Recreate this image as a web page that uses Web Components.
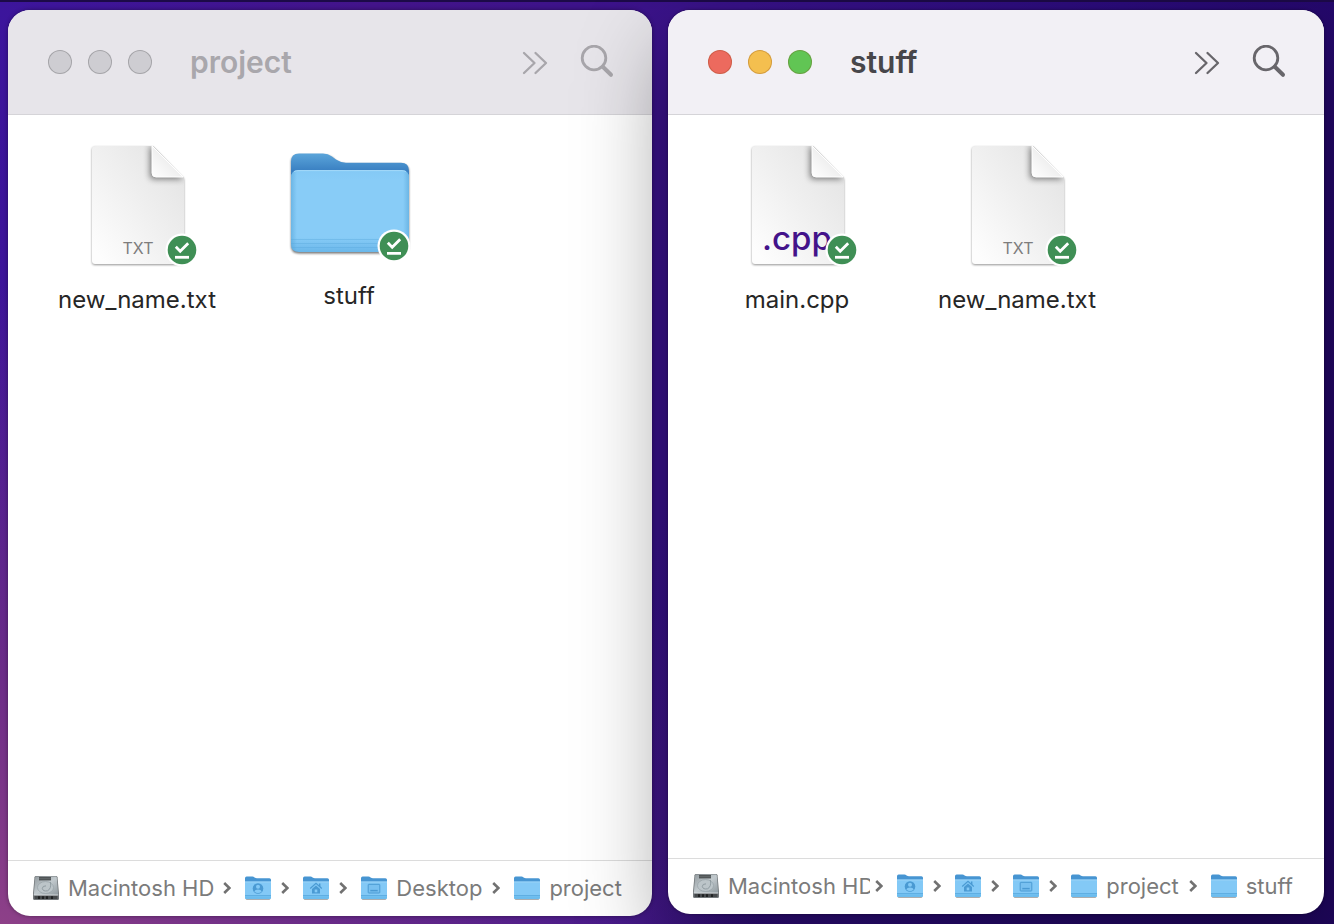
<!DOCTYPE html>
<html lang="en">
<head>
<meta charset="utf-8">
<title>Finder</title>
<style>
html, body { margin: 0; height: 100%; }
body { font-family: Inter, "Liberation Sans", sans-serif; }
</style>
</head>
<body>
<desk-top>
  <finder-window heading="project">
    <file-item kind="txt" name="new_name.txt"></file-item>
    <file-item kind="folder" name="stuff"></file-item>
    <path-crumb slot="path" kind="drive" label="Macintosh HD" shrinks></path-crumb>
    <path-crumb slot="path" kind="user" hint="Users"></path-crumb>
    <path-crumb slot="path" kind="home" hint="Home"></path-crumb>
    <path-crumb slot="path" kind="desktop" label="Desktop"></path-crumb>
    <path-crumb slot="path" kind="folder" label="project" last></path-crumb>
  </finder-window>
  <finder-window heading="stuff" active>
    <file-item kind="cpp" name="main.cpp"></file-item>
    <file-item kind="txt" name="new_name.txt"></file-item>
    <path-crumb slot="path" kind="drive" label="Macintosh HD" shrinks></path-crumb>
    <path-crumb slot="path" kind="user" hint="Users"></path-crumb>
    <path-crumb slot="path" kind="home" hint="Home"></path-crumb>
    <path-crumb slot="path" kind="desktop" hint="Desktop"></path-crumb>
    <path-crumb slot="path" kind="folder" label="project"></path-crumb>
    <path-crumb slot="path" kind="folder" label="stuff" last></path-crumb>
  </finder-window>
</desk-top>
<script>
const badge = (x, y) => `
  <g transform="translate(${x} ${y})">
    <circle r="16.500" fill="#fff"/><circle r="14.300" fill="#3f8f55"/>
    <path d="M-6.200 -3.200L-1.800 1.200L6.200 -6.800" fill="none" stroke="#fff" stroke-width="2.800"/>
    <path d="M-7 7.300H7" stroke="#fff" stroke-width="2.800"/>
  </g>`;

const sheet = (caption) => `
<svg width="128" height="130" viewBox="-1 1 128 130" aria-hidden="true">
  <defs>
    <linearGradient id="paper" x1="0" y1=".85" x2=".8" y2=".1"><stop offset="0" stop-color="#fdfdfd"/><stop offset=".55" stop-color="#f0f0f0"/><stop offset="1" stop-color="#e6e6e6"/></linearGradient>
    <linearGradient id="fold" x1="0" y1="1" x2=".6" y2=".4"><stop offset="0" stop-color="#fff"/><stop offset="1" stop-color="#ececec"/></linearGradient>
    <filter id="soft" x="-20%" y="-20%" width="140%" height="140%"><feGaussianBlur stdDeviation="1.3"/></filter>
    <filter id="wide" x="-40%" y="-40%" width="180%" height="180%"><feGaussianBlur stdDeviation="3"/></filter>
    <clipPath id="edge"><path d="M22 2H79L110 34V117Q110 120 107 120H21Q18 120 18 117V5Q18 2 22 2Z"/></clipPath>
  </defs>
  <path d="M22 3H79L110 35V118Q110 121 107 121H21Q18 121 18 118V6Q18 3 22 3Z" fill="#000" opacity=".42" filter="url(#soft)"/>
  <path d="M22 2H79L110 34V117Q110 120 107 120H21Q18 120 18 117V5Q18 2 22 2Z" fill="url(#paper)"/>
  <g clip-path="url(#edge)"><path d="M76 1V32Q76 35 80 35H110L78 2Z" fill="#000" opacity=".5" filter="url(#wide)"/></g>
  <path d="M78 2V29Q78 33 82 33H109Z" fill="url(#fold)" stroke="#fff" stroke-width="1"/>
  ${caption}
  ${badge(108, 106)}
</svg>`;

const ART = {
  txt: sheet(`<text x="64" y="110" text-anchor="middle" font-size="16" fill="#7d7d7d">TXT</text>`),
  cpp: sheet(`<text x="63" y="106" text-anchor="middle" font-size="33" font-weight="500" fill="#43138a">.cpp</text>`),
  folder: `
<svg width="128" height="126" viewBox="-1 0 128 126" aria-hidden="true">
  <defs>
    <linearGradient id="back" x1="0" y1="0" x2="0" y2="1"><stop offset="0" stop-color="#5ba5da"/><stop offset=".28" stop-color="#3a80c2"/></linearGradient>
    <linearGradient id="front" x1="0" y1="0" x2="0" y2="1"><stop offset="0" stop-color="#84c9f5"/><stop offset=".12" stop-color="#88ccf7"/><stop offset=".82" stop-color="#88ccf7"/><stop offset="1" stop-color="#6ab7ea"/></linearGradient>
    <linearGradient id="sides"><stop offset="0" stop-color="#4f9fd3" stop-opacity=".5"/><stop offset=".05" stop-color="#4f9fd3" stop-opacity="0"/><stop offset=".95" stop-color="#4f9fd3" stop-opacity="0"/><stop offset="1" stop-color="#4f9fd3" stop-opacity=".5"/></linearGradient>
    <filter id="soft" x="-20%" y="-20%" width="140%" height="140%"><feGaussianBlur stdDeviation="1.200"/></filter>
  </defs>
  <path d="M5 18Q5 10 13 10H37Q43 10 47 13L50 16Q55 19 60 19H115Q123 19 123 27V101Q123 108.500 115 108.500H13Q5 108.500 5 101Z" fill="#000" opacity=".55" filter="url(#soft)"/>
  <path d="M5 16.500Q5 8.500 13 8.500H37Q42 8.500 46 11.500L50 14.500Q55 17.800 60 17.800H115Q123 17.800 123 26V70H5Z" fill="url(#back)"/>
  <path d="M5 33Q5 25 13 25H115Q123 25 123 33V99Q123 107 115 107H13Q5 107 5 99Z" fill="url(#front)"/>
  <path d="M5 33Q5 25 13 25H115Q123 25 123 33V99Q123 107 115 107H13Q5 107 5 99Z" fill="url(#sides)"/>
  <path d="M8 26.500Q10 25.600 13 25.600H115Q118 25.600 120 26.500" fill="none" stroke="#a4d9f9" stroke-width="1"/>
  <path d="M5 94.500H123M5 98.500H123M6 102.500H122" stroke="#5aa9dd" stroke-width="1" opacity=".4"/>
  ${badge(108, 101)}
</svg>`
};

const small = (glyph) => `
<svg width="26" height="26" viewBox="0 0 26 26" aria-hidden="true">
  <rect x=".6" y="6" width="24.800" height="19" rx="1.500" fill="#777" opacity=".6"/>
  <path d="M0 3.200Q0 1.600 1.600 1.600H7.500Q8.600 1.600 9.600 2.400Q10.600 3.200 12 3.200H24.400Q26 3.200 26 4.800V12H0Z" fill="#4795d2"/>
  <path d="M0 6.600H26V22.400Q26 24 24.400 24H1.600Q0 24 0 22.400Z" fill="#83c9f6"/>
  <path d="M0 7H26" stroke="#a3d8f8" stroke-width=".8"/>
  <path d="M0 20.600H26" stroke="#5cacdf" stroke-width="1"/>
  <path d="M0 21.200H26V22.400Q26 24 24.400 24H1.600Q0 24 0 22.400Z" fill="#6cbcee"/>
  ${glyph}
</svg>`;

const SMALL = {
  folder: small(""),
  user: small(`<circle cx="13" cy="13.500" r="5.300" fill="#4a9ad3"/><circle cx="13" cy="11.800" r="2" fill="#83c9f6"/><path d="M9.300 16.500Q10 14.600 13 14.600T16.700 16.500Q15 18 13 18T9.300 16.500Z" fill="#83c9f6"/>`),
  home: small(`<path d="M7.200 13.500L13 8.300L18.800 13.500" fill="none" stroke="#4a9ad3" stroke-width="1.200"/><path d="M16 8.600H17.400V12H16Z" fill="#4a9ad3"/><path d="M9 14L13 10.600L17 14V18.500H9Z" fill="#4a9ad3"/><path d="M11.700 17.300V14.500H14.300V17.300Z" fill="#83c9f6"/>`),
  desktop: small(`<rect x="7.200" y="9.300" width="11.600" height="8.700" rx=".6" fill="#78c0f0" stroke="#4a9ad3" stroke-width="1"/><path d="M9.300 15.600H16.700" stroke="#4a9ad3" stroke-width="1.500"/>`),
  drive: `
<svg width="26" height="26" viewBox="0 0 26 28" preserveAspectRatio="none" aria-hidden="true">
  <defs><linearGradient id="metal" x1="0" y1="0" x2="1" y2="1"><stop offset="0" stop-color="#929a9e"/><stop offset=".5" stop-color="#c1c9cd"/><stop offset="1" stop-color="#909a9f"/></linearGradient></defs>
  <path d="M3 1H23Q24.300 1 24.500 2.500L26 20V25.500Q26 27 24.500 27H1.500Q0 27 0 25.500V20L1.500 2.500Q1.700 1 3 1Z" fill="#74797c"/>
  <path d="M3.300 1.500H22.700Q23.600 1.500 23.800 2.800L25.200 21.500H.8L2.200 2.800Q2.400 1.500 3.300 1.500Z" fill="url(#metal)"/>
  <rect x="6" y="2.200" width="12" height="3.600" fill="#4c5153"/>
  <path d="M6 4H18" stroke="#777e81" stroke-width=".6"/>
  <ellipse cx="12.500" cy="13.500" rx="8" ry="6.400" fill="#bcc5c9" stroke="#98a3a8" stroke-width=".8"/>
  <path d="M17.500 7.500Q18.500 15 14.500 17Q10 18 9.300 14.500Q9.500 11.500 13 11.700" fill="none" stroke="#89959b" stroke-width=".9"/>
  <path d="M.8 21.500H25.200" stroke="#dfe4e6" stroke-width=".8"/>
  <path d="M1.500 22.500H24.500V25.800H1.500Z" fill="#45494b"/>
  <path d="M5 23H7V25.800H5ZM9 23H11V25.800H9ZM13 23H15V25.800H13ZM18 23H20V25.800H18Z" fill="#1f2122"/>
</svg>`
};

class DeskTop extends HTMLElement {
  constructor() {
    super();
    this.attachShadow({ mode: "open" }).innerHTML = `
<style>
:host {
  display: grid; grid-template-columns: 644fr 656fr; gap: 16px;
  box-sizing: border-box; min-height: 100vh; padding: 8px 10px 8px 8px;
  border-top: 2px solid #1c0a48;
  background:
    radial-gradient(ellipse 760px 640px at 0 100%, #8d4088 0%, #6b2c88 40%, rgba(76,28,140,0) 100%),
    linear-gradient(100deg, #3c159c 0%, #43148a 25%, #38128a 50%, #2b0b7c 75%, #200660 100%);
}
</style><slot></slot>`;
  }
}
customElements.define("desk-top", DeskTop);

class FinderWindow extends HTMLElement {
  connectedCallback() {
    if (this.shadowRoot) return;
    this.attachShadow({ mode: "open" }).innerHTML = `
<style>
:host {
  --bar: #e7e5ea; --ink: #a8a6ab; --title: #a9a7ac; --gap: 16px; --end: 28px;
  --close: #cecdd2; --min: #cecdd2; --zoom: #cecdd2; --rim: rgba(0,0,0,.2);
  display: flex; flex-direction: column; min-width: 0; overflow: hidden;
  background: #fff; border-radius: 22px; box-shadow: 0 0 4px rgba(0,0,0,.4);
}
:host([active]) {
  --bar: #f2f0f5; --ink: #68666b; --title: #47464a; --gap: 24px; --end: 31px;
  --close: #ec6a5e; --min: #f4bf4f; --zoom: #61c554; --rim: rgba(120,50,0,.25);
  position: relative; margin-bottom: 2px;
  box-shadow: 0 0 3px rgba(0,0,0,.4), 0 36px 90px rgba(0,0,0,.4);
}
header {
  display: flex; align-items: center; box-sizing: border-box; height: 105px;
  padding: 0 38px 0 40px; background: var(--bar); border-bottom: 1px solid #d5d4d8;
}
.lights { display: flex; gap: 16px; margin-right: 38px; }
button { appearance: none; border: 0; margin: 0; padding: 0; background: none; color: var(--ink); display: block; }
.lights button { width: 24px; height: 24px; border-radius: 50%; box-shadow: inset 0 0 0 1px var(--rim); }
.close { background: var(--close); } .min { background: var(--min); } .zoom { background: var(--zoom); }
h1 { flex: 1; min-width: 0; margin: 0; font-size: 30px; line-height: 36px; font-weight: 600; color: var(--title); }
.tools { display: flex; align-items: center; gap: 32px; }
svg { display: block; fill: none; stroke: currentColor; stroke-linecap: round; }
main { flex: 1; display: flex; flex-wrap: wrap; align-content: flex-start; align-items: flex-start; gap: var(--gap); padding: 30px 0 30px 31px; }
nav { display: flex; align-items: center; box-sizing: border-box; height: 56px; padding: 0 var(--end) 2px 25px; border-top: 1px solid #dcdcdc; }
</style>
<header>
  <div class="lights">
    <button class="close" aria-label="Close"></button>
    <button class="min" aria-label="Minimize"></button>
    <button class="zoom" aria-label="Zoom"></button>
  </div>
  <h1></h1>
  <div class="tools">
    <button aria-label="More"><svg width="26" height="34" viewBox="0 0 26 34" stroke-width="2.300"><path d="M2 8L12.500 18L2 28M13.500 8L24 18L13.500 28" stroke-linejoin="round"/></svg></button>
    <button aria-label="Search"><svg width="34" height="34" viewBox="0 0 34 34" stroke-width="2.800"><circle cx="14" cy="13" r="11.800"/><path d="M22.800 21.800L31 29.800" stroke-width="4"/></svg></button>
  </div>
</header>
<main><slot></slot></main>
<nav aria-label="Path"><slot name="path"></slot></nav>`;
    this.shadowRoot.querySelector("h1").textContent = this.getAttribute("heading");
  }
}
customElements.define("finder-window", FinderWindow);

class FileItem extends HTMLElement {
  connectedCallback() {
    if (this.shadowRoot) return;
    this.attachShadow({ mode: "open" }).innerHTML = `
<style>
:host { display: flex; flex-direction: column; align-items: center; width: 196px; }
svg { display: block; }
span { margin-top: 10px; font-size: 24px; line-height: 30px; color: #262626; }
</style>
${ART[this.getAttribute("kind")]}<span></span>`;
    this.shadowRoot.querySelector("span").textContent = this.getAttribute("name");
  }
}
customElements.define("file-item", FileItem);

class PathCrumb extends HTMLElement {
  connectedCallback() {
    if (this.shadowRoot) return;
    const label = this.getAttribute("label");
    this.attachShadow({ mode: "open" }).innerHTML = `
<style>
:host { display: flex; align-items: center; flex: none; }
:host([shrinks]) { flex: 0 1 auto; min-width: 0; }
a { display: flex; align-items: center; min-width: 0; padding-right: 5px; color: #7b7b7b; text-decoration: none; font-size: 22px; line-height: 28px; }
:host([last]) a { padding-right: 0; }
:host([shrinks]) a { padding-right: 0; }
a svg { flex: none; }
a span { margin-left: 9px; overflow: hidden; white-space: nowrap; }
:host([shrinks]) span { padding-right: 4px; }
.next { flex: none; margin: 0 14px 0 5px; }
</style>
<a href="#">${SMALL[this.getAttribute("kind")]}${label ? "<span></span>" : ""}</a>
${this.hasAttribute("last") ? "" : `<svg class="next" width="8" height="14" viewBox="0 0 8 14" fill="none" stroke="#717171" stroke-width="2.600" aria-hidden="true"><path d="M1.200 2L6.400 7L1.200 12"/></svg>`}`;
    if (label) this.shadowRoot.querySelector("span").textContent = label;
    else this.shadowRoot.querySelector("a").setAttribute("aria-label", this.getAttribute("hint"));
  }
}
customElements.define("path-crumb", PathCrumb);
</script>
</body>
</html>
